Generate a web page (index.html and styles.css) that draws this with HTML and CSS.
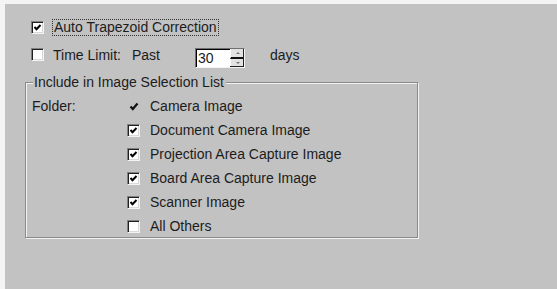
FILE: index.html
```html
<!DOCTYPE html>
<html>
<head>
<meta charset="utf-8">
<link rel="stylesheet" href="styles.css">
</head>
<body>
<div class="panel">
  <div class="row row1">
    <span class="cb"><svg viewBox="0 0 9 9" width="9" height="9"><polyline points="1.5,4 3.5,6.2 7.5,2" fill="none" stroke="#000" stroke-width="2"/></svg></span>
    <span class="focus">Auto Trapezoid Correction</span>
  </div>
  <div class="row row2">
    <span class="cb"></span>
    <span class="lbl-time">Time Limit:</span>
    <span class="lbl-past">Past</span>
    <div class="spin">
      <span class="spin-val">30</span>
      <div class="spin-btns">
        <span class="sb up"></span>
        <span class="sb down"></span>
      </div>
    </div>
    <span class="lbl-days">days</span>
  </div>
  <div class="group">
    <span class="legend">Include in Image Selection List</span>
    <div class="group-body">
      <div class="folder">Folder:</div>
      <ul class="list">
        <li><span class="tick"><svg viewBox="0 0 10 9" width="10" height="9"><polyline points="1.5,4.5 3.8,7 8.5,1.5" fill="none" stroke="#111" stroke-width="2.2"/></svg></span>Camera Image</li>
        <li><span class="cb"><svg viewBox="0 0 9 9" width="9" height="9"><polyline points="1.5,4 3.5,6.2 7.5,2" fill="none" stroke="#000" stroke-width="2"/></svg></span>Document Camera Image</li>
        <li><span class="cb"><svg viewBox="0 0 9 9" width="9" height="9"><polyline points="1.5,4 3.5,6.2 7.5,2" fill="none" stroke="#000" stroke-width="2"/></svg></span>Projection Area Capture Image</li>
        <li><span class="cb"><svg viewBox="0 0 9 9" width="9" height="9"><polyline points="1.5,4 3.5,6.2 7.5,2" fill="none" stroke="#000" stroke-width="2"/></svg></span>Board Area Capture Image</li>
        <li><span class="cb"><svg viewBox="0 0 9 9" width="9" height="9"><polyline points="1.5,4 3.5,6.2 7.5,2" fill="none" stroke="#000" stroke-width="2"/></svg></span>Scanner Image</li>
        <li><span class="cb"></span>All Others</li>
      </ul>
    </div>
  </div>
</div>
</body>
</html>
```
FILE: styles.css
```css
html, body {
  margin: 0;
  padding: 0;
  background: #f4f4f4;
}
body {
  width: 557px;
  height: 289px;
  overflow: hidden;
  font-family: "Liberation Sans", Arial, sans-serif;
  font-size: 14px;
  color: #1c1c1c;
}
.panel {
  margin: 4px 0 0 5px;
  height: 285px;
  background: #c2c2c2;
  padding: 15px 0 0 20px;
  box-sizing: border-box;
}
.row {
  display: flex;
  padding-left: 6px;
}
.row1 {
  height: 17px;
  align-items: center;
}
.row2 {
  margin-top: 11px;
  height: 21px;
  align-items: flex-start;
  line-height: 16px;
}
.cb {
  width: 13px;
  height: 13px;
  box-sizing: border-box;
  background: #fff;
  border-top: 1px solid #808080;
  border-left: 1px solid #808080;
  border-bottom: 1px solid #f4f4f4;
  border-right: 1px solid #f4f4f4;
  box-shadow: inset 1px 1px 0 #202020, inset -1px -1px 0 #d8d8d8;
  display: flex;
  align-items: center;
  justify-content: center;
  flex: none;
}
.cb svg { display: block; }
.row1 .cb { margin-right: 8px; }
.focus {
  border: 1px dotted #333;
  padding: 0 1px;
  line-height: 15px;
}
.row2 .cb { margin-top: 1px; margin-right: 9px; }
.lbl-time { width: 79px; }
.lbl-past { width: 63px; }
.spin {
  margin-top: 1px;
  width: 50px;
  height: 20px;
  box-sizing: border-box;
  background: #fff;
  border-top: 1px solid #707070;
  border-left: 1px solid #707070;
  border-bottom: 1px solid #f4f4f4;
  border-right: 1px solid #f4f4f4;
  box-shadow: inset 1px 1px 0 #000;
  display: flex;
}
.spin-val {
  flex: 1;
  padding-left: 2px;
  line-height: 18px;
}
.spin-btns {
  width: 14px;
  display: flex;
  flex-direction: column;
  border-right: 1px solid #222;
  border-bottom: 1px solid #222;
  box-sizing: border-box;
}
.sb {
  flex: 1;
  background: #e2e2e2;
  border-left: 1px solid #fff;
  position: relative;
}
.sb.up { border-bottom: 2px solid #111; }
.sb::after {
  content: "";
  position: absolute;
  left: 5px;
  top: 3px;
  border-left: 2px solid transparent;
  border-right: 2px solid transparent;
}
.sb.up::after { border-bottom: 2px solid #777; }
.sb.down::after { border-top: 2px solid #777; top: 3px; }
.lbl-days { margin-left: 25px; }
.group {
  margin-top: 14px;
  width: 393px;
  height: 156px;
  box-sizing: border-box;
  border: 1px solid #8a8a8a;
  box-shadow: inset 1px 1px 0 #f2f2f2, 1px 1px 0 #f2f2f2;
  position: relative;
}
.legend {
  position: absolute;
  left: 7px;
  top: -9px;
  background: #c2c2c2;
  padding: 0 2px 0 1px;
  line-height: 16px;
}
.group-body {
  display: flex;
  padding: 11px 0 0 6px;
}
.folder {
  width: 95px;
  line-height: 24px;
}
.list {
  list-style: none;
  margin: 0;
  padding: 0;
}
.list li {
  height: 24px;
  display: flex;
  align-items: center;
}
.list .cb { margin-right: 10px; }
.tick {
  width: 13px;
  margin-right: 10px;
  display: flex;
  justify-content: center;
}
.tick svg { display: block; }
```
